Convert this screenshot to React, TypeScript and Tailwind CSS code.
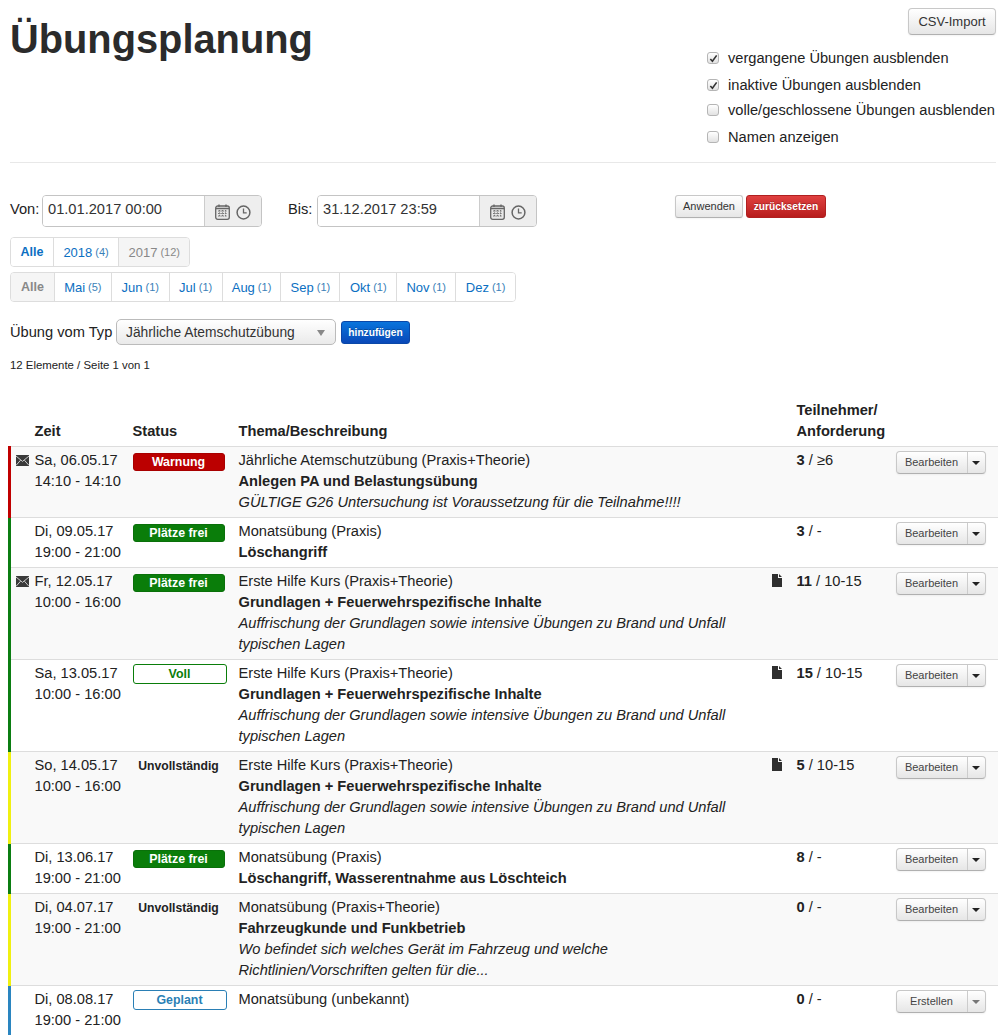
const btn = "bg-gradient-to-b from-white to-[#e6e6e6] border border-[#c8c8c8] border-b-[#b0b0b0] shadow-[0_1px_2px_rgba(0,0,0,0.05)]";

function Envelope() {
  return (
    <svg viewBox="0 0 13 11" className="w-[13px] h-[11px]">
      <path d="M0 0h13v11H0z" fill="#3a3a3a" />
      <path d="M0 1l6.5 5.4L13 1M0 10.4l4.6-5.2M13 10.4L8.4 5.2" fill="none" stroke="#ddd" strokeWidth="0.9" />
    </svg>
  );
}

function FileIcon() {
  return (
    <svg viewBox="0 0 10 13" className="w-[10px] h-[13px]">
      <path d="M0 0h6v4h4v9H0zM7 0l3 3H7z" fill="#2f2f2f" />
    </svg>
  );
}

function Calendar() {
  return (
    <svg viewBox="0 0 15 16" className="w-[15px] h-[16px]">
      <rect x="0.7" y="2" width="13.6" height="13.3" rx="2" fill="#e8e8e8" stroke="#666" strokeWidth="1.3" />
      <path d="M1 4.5h13" stroke="#666" strokeWidth="1.6" />
      <path d="M4 0.5v2.5M11 0.5v2.5" stroke="#666" strokeWidth="1.4" />
      <path d="M3 7h9M3 9.5h9M3 12h9M4.5 6v7M7.5 6v7M10.5 6v7" stroke="#777" strokeWidth="1" strokeDasharray="1.4 1" />
    </svg>
  );
}

function Clock() {
  return (
    <svg viewBox="0 0 15 15" className="w-[15px] h-[15px]">
      <circle cx="7.5" cy="7.5" r="6.4" fill="none" stroke="#666" strokeWidth="1.5" />
      <path d="M7.5 3.5v4.3h3.2" fill="none" stroke="#666" strokeWidth="1.3" />
    </svg>
  );
}

function Check({ on, label, low }: { on?: boolean; label: string; low?: boolean }) {
  return (
    <div className={`flex items-center h-[26px] text-[#222] ${low ? "pt-[2px]" : ""}`}>
      <span className="w-[12px] h-[12px] rounded-[3px] border border-[#b5b5b5] bg-gradient-to-b from-white to-[#e2e2e2] flex items-center justify-center mr-[9px] shrink-0">
        {on && (
          <svg viewBox="0 0 10 10" className="w-[9px] h-[9px]">
            <path d="M1.5 5.5l2.3 2.5L8.5 1.5" fill="none" stroke="#333" strokeWidth="1.8" />
          </svg>
        )}
      </span>
      {label}
    </div>
  );
}

function DateField({ value }: { value: string }) {
  return (
    <div className="flex w-[220px] h-[32px] border border-[#c4c4c4] rounded-[4px] overflow-hidden shadow-[inset_0_1px_1px_rgba(0,0,0,0.08)]">
      <div className="w-[162px] pl-[5px] pt-[3px] text-[#333] bg-white border-r border-[#ccc]">{value}</div>
      <div className="flex-1 bg-[#eeeeee] flex items-center pl-[10px] gap-[6px] pt-[2px]">
        <Calendar />
        <Clock />
      </div>
    </div>
  );
}

function Pill({ label, count, state, w }: { label: string; count?: string; state?: string; w: string }) {
  const cls =
    state === "active"
      ? "bg-white text-[#0b6fc2] font-bold text-[12.5px]"
      : state === "grey"
        ? "bg-[#f5f5f5] text-[#888] text-[13px]"
        : state === "greyBold"
          ? "bg-[#f5f5f5] text-[#888] font-bold text-[12.5px]"
          : "bg-white text-[#0b6fc2] text-[13px]";
  return (
    <div className={`${w} ${cls} flex items-center justify-center border-r border-[#ddd] last:border-r-0 whitespace-nowrap`}>
      {label}
      {count && <span className={`text-[11px] ml-[3px] ${state === "grey" ? "text-[#888]" : "text-[#3b7fb8]"}`}>{count}</span>}
    </div>
  );
}

const bars: Record<string, string> = {
  red: "border-l-[#c00000]",
  green: "border-l-[#0b7d12]",
  yellow: "border-l-[#f0f010]",
  blue: "border-l-[#2a85c0]",
};

function Status({ type }: { type: string }) {
  if (type === "warn") return <div className="w-[92px] h-[18px] mt-[2px] bg-[#bb0000] border border-[#a80000] rounded-[3px] text-white font-bold text-[12.4px] leading-[16px] text-center">Warnung</div>;
  if (type === "free") return <div className="w-[92px] h-[18px] mt-[2px] bg-[#0a7d0a] border border-[#0a700a] rounded-[3px] text-white font-bold text-[12.4px] leading-[16px] text-center">Plätze frei</div>;
  if (type === "full") return <div className="w-[94px] h-[20px] bg-white border border-[#0a7d0a] rounded-[3px] text-[#0a7d0a] font-bold text-[12.4px] leading-[18px] text-center">Voll</div>;
  if (type === "plan") return <div className="w-[94px] h-[20px] bg-white border border-[#2a7fb5] rounded-[3px] text-[#2a7fb5] font-bold text-[12.4px] leading-[18px] text-center">Geplant</div>;
  return <div className="w-[92px] text-[#222] font-bold text-[12.2px] leading-[20px] text-center">Unvollständig</div>;
}

const rows = [
  { bar: "red", mail: true, date: "Sa, 06.05.17", time: "14:10 - 14:10", status: "warn", type: "Jährliche Atemschutzübung (Praxis+Theorie)", title: "Anlegen PA und Belastungsübung", desc: "GÜLTIGE G26 Untersuchung ist Voraussetzung für die Teilnahme!!!!", n: "3", req: "≥6" },
  { bar: "green", date: "Di, 09.05.17", time: "19:00 - 21:00", status: "free", type: "Monatsübung (Praxis)", title: "Löschangriff", n: "3", req: "-" },
  { bar: "green", mail: true, file: true, date: "Fr, 12.05.17", time: "10:00 - 16:00", status: "free", type: "Erste Hilfe Kurs (Praxis+Theorie)", title: "Grundlagen + Feuerwehrspezifische Inhalte", desc: "Auffrischung der Grundlagen sowie intensive Übungen zu Brand und Unfall typischen Lagen", n: "11", req: "10-15" },
  { bar: "green", file: true, date: "Sa, 13.05.17", time: "10:00 - 16:00", status: "full", type: "Erste Hilfe Kurs (Praxis+Theorie)", title: "Grundlagen + Feuerwehrspezifische Inhalte", desc: "Auffrischung der Grundlagen sowie intensive Übungen zu Brand und Unfall typischen Lagen", n: "15", req: "10-15" },
  { bar: "yellow", file: true, date: "So, 14.05.17", time: "10:00 - 16:00", status: "none", type: "Erste Hilfe Kurs (Praxis+Theorie)", title: "Grundlagen + Feuerwehrspezifische Inhalte", desc: "Auffrischung der Grundlagen sowie intensive Übungen zu Brand und Unfall typischen Lagen", n: "5", req: "10-15" },
  { bar: "green", date: "Di, 13.06.17", time: "19:00 - 21:00", status: "free", type: "Monatsübung (Praxis)", title: "Löschangriff, Wasserentnahme aus Löschteich", n: "8", req: "-" },
  { bar: "yellow", date: "Di, 04.07.17", time: "19:00 - 21:00", status: "none", type: "Monatsübung (Praxis+Theorie)", title: "Fahrzeugkunde und Funkbetrieb", desc: "Wo befindet sich welches Gerät im Fahrzeug und welche Richtlinien/Vorschriften gelten für die...", n: "0", req: "-" },
  { bar: "blue", date: "Di, 08.08.17", time: "19:00 - 21:00", status: "plan", type: "Monatsübung (unbekannt)", n: "0", req: "-", create: true },
];

export default function App() {
  return (
    <div className="font-['Liberation_Sans',sans-serif] text-[14.65px] leading-[21px] text-[#222] bg-white w-[1000px] h-[1035px] overflow-hidden">
      <div className="pl-[10px] pr-[4px]">
        {/* Kopf */}
        <div className="flex justify-between h-[162px] border-b border-[#e8e8e8] box-content">
          <h1 className="font-bold text-[39.8px] leading-[44px] mt-[17px] text-[#2b2b2b]">Übungsplanung</h1>
          <div className="w-[289px] flex flex-col">
            <div className="flex justify-end pt-[8px] h-[45px]">
              <div className={`${btn} w-[88px] h-[27px] rounded-[4px] text-[13px] leading-[25px] text-center text-[#333]`}>CSV-Import</div>
            </div>
            <Check on label="vergangene Übungen ausblenden" />
            <Check on low label="inaktive Übungen ausblenden" />
            <Check label="volle/geschlossene Übungen ausblenden" />
            <Check low label="Namen anzeigen" />
          </div>
        </div>

        {/* Filter */}
        <div className="flex mt-[32px] h-[32px]">
          <span className="w-[32px] pt-[4px]">Von:</span>
          <DateField value="01.01.2017 00:00" />
          <span className="ml-[26px] w-[29px] pt-[4px]">Bis:</span>
          <DateField value="31.12.2017 23:59" />
          <div className={`${btn} ml-[138px] w-[68px] h-[23px] rounded-[3px] text-[11px] leading-[21px] text-center text-[#333]`}>Anwenden</div>
          <div className="ml-[3px] w-[80px] h-[23px] rounded-[3px] bg-gradient-to-b from-[#e04040] to-[#b81c1c] border border-[#b02020] text-[10.2px] leading-[21px] text-center font-bold text-white [text-shadow:0_-1px_0_rgba(0,0,0,0.25)]">zurücksetzen</div>
        </div>

        <div className="flex w-[180px] h-[30px] mt-[10px] border border-[#ddd] rounded-[4px] overflow-hidden">
          <Pill w="w-[43px]" label="Alle" state="active" />
          <Pill w="w-[66px]" label="2018" count="(4)" />
          <Pill w="w-[70px]" label="2017" count="(12)" state="grey" />
        </div>
        <div className="flex w-[506px] h-[30px] mt-[5px] border border-[#ddd] rounded-[4px] overflow-hidden">
          <Pill w="w-[44px]" label="Alle" state="greyBold" />
          <Pill w="w-[57px]" label="Mai" count="(5)" />
          <Pill w="w-[58px]" label="Jun" count="(1)" />
          <Pill w="w-[53px]" label="Jul" count="(1)" />
          <Pill w="w-[59px]" label="Aug" count="(1)" />
          <Pill w="w-[59px]" label="Sep" count="(1)" />
          <Pill w="w-[57px]" label="Okt" count="(1)" />
          <Pill w="w-[59px]" label="Nov" count="(1)" />
          <Pill w="w-[59px]" label="Dez" count="(1)" />
        </div>

        <div className="flex items-center mt-[17px] h-[26px]">
          <span className="w-[106px]">Übung vom Typ</span>
          <div className="relative w-[220px] h-[26px] border border-[#bbb] rounded-[5px] bg-gradient-to-b from-white to-[#eaeaea] pl-[9px] text-[13.8px] leading-[25px] text-[#333]">
            Jährliche Atemschutzübung
            <span className="absolute right-[10px] top-[10px] w-0 h-0 border-x-[4px] border-x-transparent border-t-[6px] border-t-[#888]" />
          </div>
          <div className="ml-[5px] w-[69px] h-[23px] rounded-[3px] bg-gradient-to-b from-[#0a74dc] to-[#0a48b8] border border-[#0a48a8] text-[10.2px] leading-[21px] text-center font-bold text-white [text-shadow:0_-1px_0_rgba(0,0,0,0.25)]">hinzufügen</div>
        </div>
        <div className="text-[11.4px] mt-[11px] leading-[18px]">12 Elemente / Seite 1 von 1</div>
      </div>

      {/* Tabelle */}
      <table className="table-fixed w-[988px] ml-[8px] mt-[26px] border-collapse">
        <colgroup>
          <col className="w-[25px]" />
          <col className="w-[98px]" />
          <col className="w-[106px]" />
          <col className="w-[533px]" />
          <col className="w-[25px]" />
          <col className="w-[99px]" />
          <col className="w-[102px]" />
        </colgroup>
        <thead>
          <tr className="font-bold align-bottom text-left">
            <th />
            <th className="pb-[4px]">Zeit</th>
            <th className="pb-[4px]">Status</th>
            <th className="pb-[4px]">Thema/Beschreibung</th>
            <th />
            <th className="pb-[4px]">Teilnehmer/<br />Anforderung</th>
            <th />
          </tr>
        </thead>
        <tbody>
          {rows.map((r, i) => (
            <tr key={i} className={`align-top ${i % 2 === 0 ? "bg-[#f9f9f9]" : "bg-white"}`}>
              <td className={`border-t border-t-[#ddd] border-l-[3px] ${bars[r.bar]} pl-[5px] pt-[8px]`}>{r.mail && <Envelope />}</td>
              <td className="border-t border-t-[#ddd] pt-[3px] pb-[4px]">
                <div>{r.date}</div>
                <div>{r.time}</div>
              </td>
              <td className="border-t border-t-[#ddd] pt-[4px]"><Status type={r.status} /></td>
              <td className="border-t border-t-[#ddd] pt-[3px] pb-[4px] pr-[30px]">
                <div>{r.type}</div>
                {r.title && <div className="font-bold">{r.title}</div>}
                {r.desc && <div className="italic">{r.desc}</div>}
              </td>
              <td className="border-t border-t-[#ddd] pt-[6px]">{r.file && <FileIcon />}</td>
              <td className="border-t border-t-[#ddd] pt-[3px]"><b>{r.n}</b> / {r.req}</td>
              <td className="border-t border-t-[#ddd] pt-[4px]">
                <div className={`${btn} flex w-[90px] h-[23px] rounded-[4px] text-[11px] leading-[21px] text-[#444]`}>
                  <span className="w-[71px] text-center border-r border-[#ccc]">{r.create ? "Erstellen" : "Bearbeiten"}</span>
                  <span className="flex-1 flex items-center justify-center">
                    <span className={`w-0 h-0 border-x-[4px] border-x-transparent border-t-[4px] ${r.create ? "border-t-[#777]" : "border-t-[#222]"}`} />
                  </span>
                </div>
              </td>
            </tr>
          ))}
        </tbody>
      </table>
    </div>
  );
}
